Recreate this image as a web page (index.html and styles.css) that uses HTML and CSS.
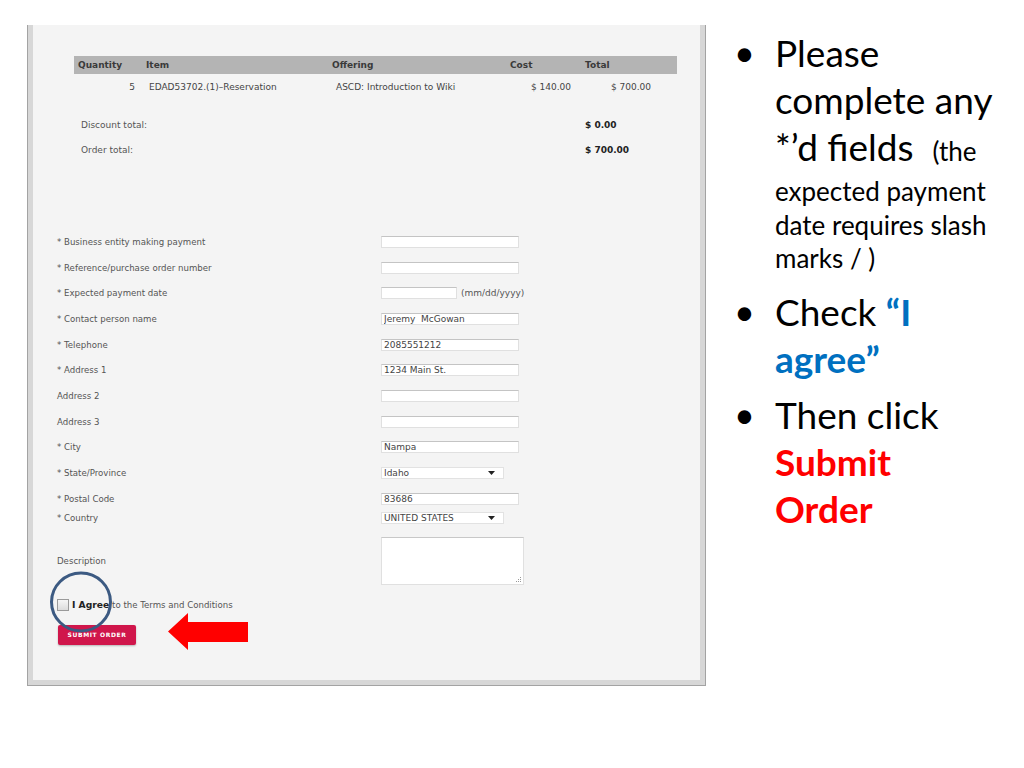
FILE: index.html
```html
<!DOCTYPE html>
<html>
<head>
<meta charset="utf-8">
<link rel="stylesheet" href="styles.css">
</head>
<body>
<div class="slide">
  <div class="shot">
    <div class="inner">
      <div class="order">
        <div class="thead">
          <div class="th c-qty">Quantity</div>
          <div class="th c-item">Item</div>
          <div class="th c-off">Offering</div>
          <div class="th c-cost">Cost</div>
          <div class="th c-tot">Total</div>
        </div>
        <div class="trow">
          <div class="td d-qty">5</div>
          <div class="td d-item">EDAD53702.(1)–Reservation</div>
          <div class="td d-off">ASCD: Introduction to Wiki</div>
          <div class="td d-cost">$ 140.00</div>
          <div class="td d-tot">$ 700.00</div>
        </div>
        <div class="totals">
          <div class="sum"><span class="sum-label">Discount total:</span><span class="sum-val">$ 0.00</span></div>
          <div class="sum"><span class="sum-label">Order total:</span><span class="sum-val">$ 700.00</span></div>
        </div>
      </div>

      <div class="form">
        <div class="frow"><label>* Business entity making payment</label><div class="ctl"><input class="txt" type="text" value=""></div></div>
        <div class="frow"><label>* Reference/purchase order number</label><div class="ctl"><input class="txt" type="text" value=""></div></div>
        <div class="frow"><label>* Expected payment date</label><div class="ctl"><input class="txt short" type="text" value=""><span class="hint">(mm/dd/yyyy)</span></div></div>
        <div class="frow"><label>* Contact person name</label><div class="ctl"><input class="txt" type="text" value="Jeremy  McGowan"></div></div>
        <div class="frow"><label>* Telephone</label><div class="ctl"><input class="txt" type="text" value="2085551212"></div></div>
        <div class="frow"><label>* Address 1</label><div class="ctl"><input class="txt" type="text" value="1234 Main St."></div></div>
        <div class="frow"><label>Address 2</label><div class="ctl"><input class="txt" type="text" value=""></div></div>
        <div class="frow"><label>Address 3</label><div class="ctl"><input class="txt" type="text" value=""></div></div>
        <div class="frow"><label>* City</label><div class="ctl"><input class="txt" type="text" value="Nampa"></div></div>
        <div class="frow"><label>* State/Province</label><div class="ctl"><div class="sel"><span>Idaho</span><svg class="caret" width="7" height="4" viewBox="0 0 7 4"><path d="M0 0H7L3.5 4Z" fill="#222"/></svg></div></div></div>
        <div class="frow"><label>* Postal Code</label><div class="ctl"><input class="txt" type="text" value="83686"></div></div>
        <div class="frow country"><label>* Country</label><div class="ctl"><div class="sel"><span>UNITED STATES</span><svg class="caret" width="7" height="4" viewBox="0 0 7 4"><path d="M0 0H7L3.5 4Z" fill="#222"/></svg></div></div></div>
        <div class="frow desc"><label>Description</label><div class="ctl"><div class="area-wrap"><textarea class="area"></textarea><svg class="grip" width="5" height="5" viewBox="0 0 5 5"><rect x="4" y="0" width="1" height="1" fill="#999"/><rect x="2" y="2" width="1" height="1" fill="#999"/><rect x="4" y="2" width="1" height="1" fill="#999"/><rect x="0" y="4" width="1" height="1" fill="#999"/><rect x="2" y="4" width="1" height="1" fill="#999"/><rect x="4" y="4" width="1" height="1" fill="#999"/></svg></div></div></div>
        <div class="agree"><span class="box"></span><b>I Agree</b>&nbsp;to the Terms and Conditions</div>
        <div class="actions"><button class="submit" type="button">SUBMIT ORDER</button></div>
      </div>

      <svg class="ring" width="64" height="64" viewBox="0 0 64 64"><ellipse cx="32" cy="32" rx="29.5" ry="29" fill="none" stroke="#3c5a82" stroke-width="3"/></svg>
      <svg class="arrow" width="80" height="37" viewBox="0 0 80 37"><polygon points="0,18.5 20,0 20,9 80,9 80,29 20,29 20,37" fill="#ff0000"/></svg>
    </div>
  </div>

  <div class="notes">
    <div class="item">
      <span class="dot">•</span>
      <div class="lines">
        <div class="big">Please</div>
        <div class="big">complete any</div>
        <div class="big">*’d fields&nbsp; <span class="sm">(the</span></div>
        <div class="small">expected payment</div>
        <div class="small">date requires slash</div>
        <div class="small">marks / )</div>
      </div>
    </div>
    <div class="item second">
      <span class="dot">•</span>
      <div class="lines">
        <div class="big">Check <b class="blue">“I</b></div>
        <div class="big"><b class="blue">agree”</b></div>
      </div>
    </div>
    <div class="item third">
      <span class="dot">•</span>
      <div class="lines">
        <div class="big">Then click</div>
        <div class="big"><b class="red">Submit</b></div>
        <div class="big"><b class="red">Order</b></div>
      </div>
    </div>
  </div>
</div>
</body>
</html>
```

FILE: styles.css
```css
* { box-sizing: border-box; }
html, body { margin: 0; padding: 0; background: #ffffff; }
body { width: 1024px; height: 768px; overflow: hidden; }

.slide { display: flex; align-items: flex-start; }

/* screenshot panel */
.shot {
  margin: 25px 0 0 27px;
  width: 679px;
  background: #d7d7d7;
  border: 1px solid #a3a3a3;
  border-top: none;
  padding: 0 5px 5px 5px;
}
.inner {
  position: relative;
  height: 655px;
  background: #f4f4f4;
  padding-top: 31px;
  font-family: "DejaVu Sans", Verdana, sans-serif;
  font-size: 9px;
  color: #555;
}

/* order table */
.order { margin-left: 41px; width: 603px; }
.thead, .trow {
  display: grid;
  grid-template-columns: 68px 186px 178px 75px 96px;
}
.thead { background: #b4b4b4; height: 18px; align-items: center; }
.th { font-weight: bold; color: #3a3a3a; padding-left: 4px; }
.trow { height: 26px; align-items: center; color: #444; }
.d-qty { text-align: right; padding-right: 7px; }
.d-item { padding-left: 7px; }
.d-off { padding-left: 8px; }
.d-cost { text-align: right; padding-right: 10px; }
.d-tot { text-align: right; padding-right: 26px; }

.totals { margin-top: 12px; }
.sum {
  display: grid;
  grid-template-columns: 507px 96px;
  height: 25px;
  align-items: center;
}
.sum-label { padding-left: 7px; color: #555; }
.sum-val { padding-left: 4px; font-weight: bold; color: #222; }

/* form */
.form { margin-top: 67px; padding-left: 24px; }
.frow {
  display: grid;
  grid-template-columns: 324px 1fr;
  height: 25.7px;
  align-items: center;
}
.frow label { color: #555; font-size: 8.6px; }
.ctl { display: flex; align-items: center; }
.txt {
  width: 138px;
  height: 12px;
  margin: 0;
  padding: 0 0 0 2px;
  border: 1px solid #e0e0e0;
  border-top-color: #c4c4c4;
  background: #fff;
  font-family: "DejaVu Sans", Verdana, sans-serif;
  font-size: 9px;
  color: #444;
  outline: none;
}
.txt.short { width: 76px; }
.hint { margin-left: 4px; color: #555; }
.sel {
  width: 123px;
  height: 12px;
  border: 1px solid #e2e2e2;
  background: #fff;
  padding-left: 2px;
  display: flex;
  align-items: center;
  justify-content: space-between;
  color: #444;
  line-height: 1;
}
.caret { margin-right: 8px; }
.frow.country { height: 13px; }
.frow.desc { height: 48px; margin-top: 12px; }
.area-wrap { position: relative; width: 143px; height: 48px; }
.area {
  display: block;
  width: 143px;
  height: 48px;
  margin: 0;
  border: 1px solid #e0e0e0;
  border-top-color: #c8c8c8;
  background: #fff;
  resize: none;
}
.grip { position: absolute; right: 3px; bottom: 3px; }
.agree {
  margin-top: 13px;
  height: 14px;
  display: flex;
  align-items: center;
  color: #555;
  font-size: 8.6px;
}
.agree b { color: #222; margin-left: 3px; font-size: 9.2px; }
.box {
  width: 12px; height: 12px;
  border: 1px solid #9a9a9a;
  background: linear-gradient(#f6f6f6, #dcdcdc);
  display: inline-block;
}
.actions { margin-top: 13px; margin-left: 1px; }
.submit {
  width: 78px;
  height: 20px;
  border: none;
  border-radius: 2px;
  background: #d0164b;
  color: #fff;
  font-family: "DejaVu Sans", Verdana, sans-serif;
  font-weight: bold;
  font-size: 6px;
  letter-spacing: 0.6px;
  padding: 0;
  box-shadow: 0 1px 2px rgba(0,0,0,0.25);
}

/* annotations */
.ring { position: absolute; left: 16px; top: 545px; }
.arrow { position: absolute; left: 135px; top: 588px; }

/* notes */
.notes {
  margin-left: 28px;
  padding-top: 29px;
  font-family: Lato, "Open Sans", sans-serif;
  color: #000;
}
.item { display: flex; }
.item.second { margin-top: 12px; }
.item.third { margin-top: 9px; }
.dot { width: 41px; font-size: 36px; line-height: 47px; }
.big { font-size: 37px; line-height: 47px; white-space: nowrap; }
.small { font-size: 26px; line-height: 33.5px; white-space: nowrap; }
.sm { font-size: 26px; }
.blue { color: #0070c0; }
.red { color: #ff0000; }
```
